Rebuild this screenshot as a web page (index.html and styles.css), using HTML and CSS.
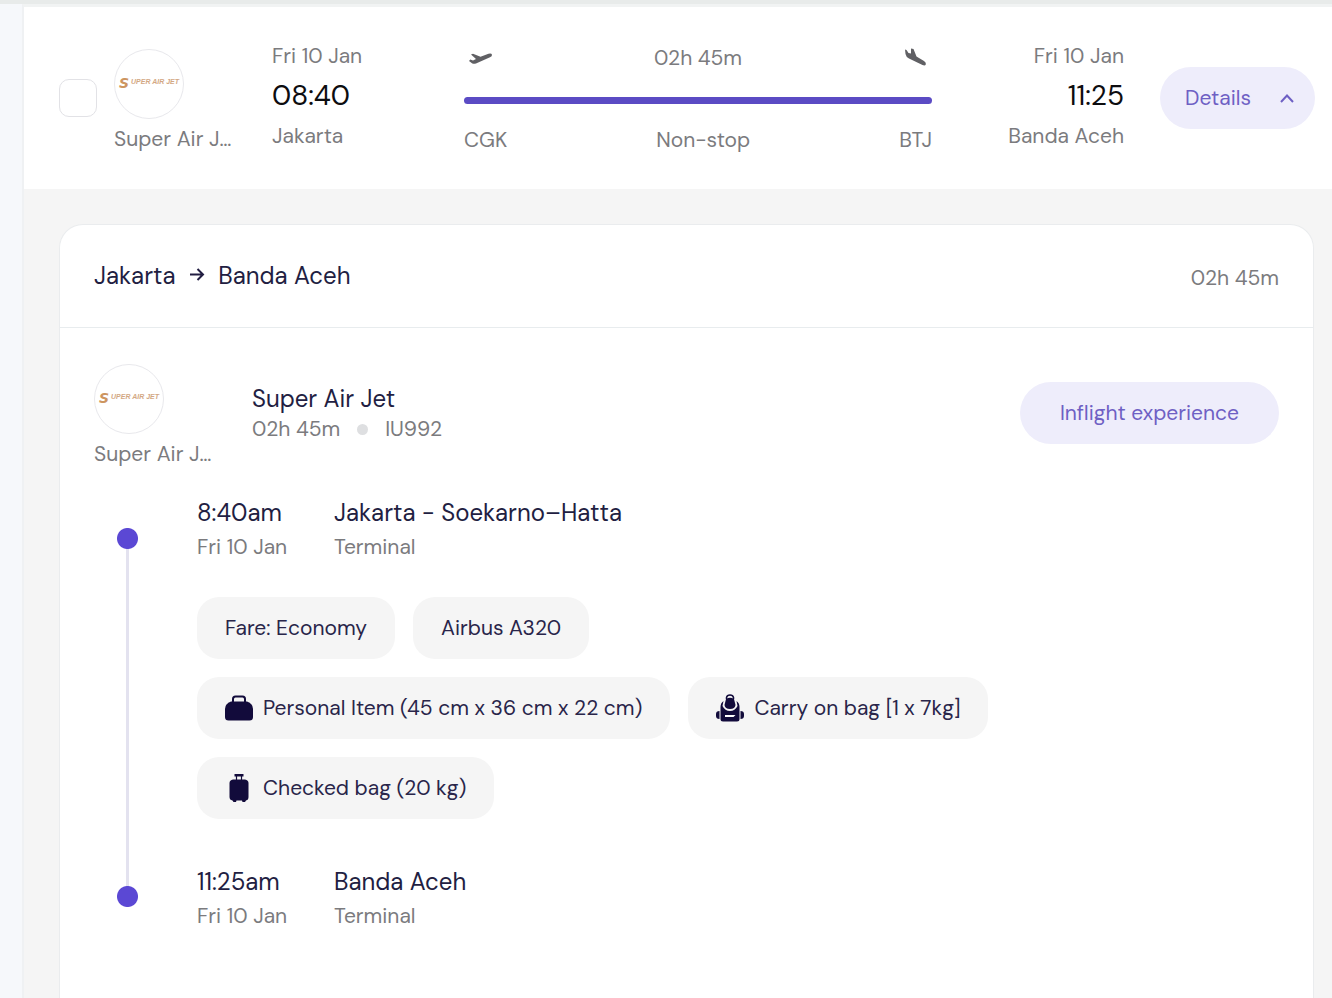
FILE: index.html
```html
<!DOCTYPE html>
<html lang="en">
<head>
<meta charset="utf-8">
<meta name="viewport" content="width=device-width, initial-scale=1">
<title>Jakarta to Banda Aceh</title>
<link rel="stylesheet" href="styles.css">
</head>
<body>
<main class="result">
  <section class="summary" aria-label="Flight summary">
    <input class="pick" type="checkbox" aria-label="Select flight">
    <div class="airline">
      <svg class="logo" viewBox="0 0 70 70" role="img" aria-label="Super Air Jet logo">
        <circle cx="35" cy="35" r="34.5" fill="#fff" stroke="#e8e8ec"/>
        <text class="logo-s" x="5" y="39">S</text>
        <text class="logo-name" x="17" y="35">UPER AIR JET</text>
      </svg>
      <span class="airline-name">Super Air Jet</span>
    </div>
    <div class="endpoint">
      <span>Fri 10 Jan</span>
      <strong class="clock">08:40</strong>
      <span>Jakarta</span>
    </div>
    <div class="route">
      <div class="route-row">
        <svg class="plane" viewBox="0 0 32 28" aria-hidden="true"><path d="M5 17 6.300 15.600 9 16.500 12 15 7 10.500 9 9.800 16.500 12.700 24.500 9.800Q27.500 9 28 10.800 28.200 12.300 26 13.300L12 19.500Q9.500 20.300 8 19.300Z"/></svg>
        <span>02h 45m</span>
        <svg class="plane" viewBox="0 0 32 28" aria-hidden="true"><path d="M5 5.500 6.500 6 8.500 9 11 9.500 11 4.500 13.500 5 16.500 12.500 24 17Q26.500 18.500 25.800 20.500 25 22 22.500 21L9 14.500Q6 13 5.500 10Z"/></svg>
      </div>
      <div class="route-bar"></div>
      <div class="route-row">
        <span>CGK</span><span>Non-stop</span><span>BTJ</span>
      </div>
    </div>
    <div class="endpoint endpoint-end">
      <span>Fri 10 Jan</span>
      <strong class="clock">11:25</strong>
      <span>Banda Aceh</span>
    </div>
    <button class="pill pill-details" type="button" aria-expanded="true">
      Details
      <svg class="chevron" viewBox="0 0 16 16" aria-hidden="true"><path d="M2 12 8 5.500l6 6.500"/></svg>
    </button>
  </section>

  <section class="details" aria-label="Flight details">
    <article class="card">
      <header class="card-head">
        <h2 class="title">Jakarta
          <svg class="arrow" viewBox="0 0 16 16" aria-hidden="true"><path d="M1 6.500h13M8.500 1l5.500 5.500L8.500 12"/></svg>
          Banda Aceh</h2>
        <span class="duration">02h 45m</span>
      </header>
      <div class="card-body">
        <div class="carrier">
          <div class="airline">
            <svg class="logo" viewBox="0 0 70 70" role="img" aria-label="Super Air Jet logo">
              <circle cx="35" cy="35" r="34.5" fill="#fff" stroke="#e8e8ec"/>
              <text class="logo-s" x="5" y="39">S</text>
              <text class="logo-name" x="17" y="35">UPER AIR JET</text>
            </svg>
            <span class="airline-name">Super Air Jet</span>
          </div>
          <div class="carrier-info">
            <h3 class="title">Super Air Jet</h3>
            <p class="meta"><span>02h 45m</span><i class="dot"></i><span>IU992</span></p>
          </div>
          <button class="pill pill-inflight" type="button">Inflight experience</button>
        </div>

        <div class="timeline">
          <div class="rail"></div>
          <div class="stops">
            <div class="stop">
              <div class="stop-time"><p class="title">8:40am</p><p>Fri 10 Jan</p></div>
              <div><p class="title">Jakarta - Soekarno–Hatta</p><p>Terminal</p></div>
            </div>
            <ul class="chips">
              <li class="chip">Fare: Economy</li>
              <li class="chip">Airbus A320</li>
              <li class="chip">
                <svg class="bag" viewBox="0 0 28 28" aria-hidden="true"><path d="M8 8.500V5Q8 2.500 10.500 2.500h7Q20 2.500 20 5V8.500" fill="none" stroke="#120b3b" stroke-width="2"/><path d="M6 7.500H22Q28 9.500 28 15V23Q28 26.500 24.500 26.500H3.500Q0 26.500 0 23V15Q0 9.500 6 7.500Z"/></svg>
                Personal Item (45 cm x 36 cm x 22 cm)
              </li>
              <li class="chip">
                <svg class="bag" viewBox="0 0 28 28" aria-hidden="true"><path d="M10.500 5V3.500Q11 1 14 1t3.500 2.500V5" fill="none" stroke="#120b3b" stroke-width="1.500"/><path d="M10 5Q14 2.500 18 5L19.500 11Q19 15 14 15T8.500 11Z"/><path d="M7.500 7 6.500 12Q9 17 14 17t7.500-5L20.500 7Q23.500 9 23.500 13V25Q23.500 27.500 21 27.500H7Q4.500 27.500 4.500 25V13Q4.500 9 7.500 7Z"/><path d="M3.500 17Q0 17 0 20v2q0 3 3.500 3ZM24.500 17Q28 17 28 20v2q0 3-3.500 3Z"/><path d="M9 21H19.500l-2 2H9Z" fill="#fff"/></svg>
                Carry on bag [1 x 7kg]
              </li>
              <li class="chip">
                <svg class="bag" viewBox="0 0 28 28" aria-hidden="true"><path d="M9.500 0h9v2.500h-9Z"/><path d="M11.500 2v4M16.500 2v4" fill="none" stroke="#120b3b" stroke-width="1.200"/><path d="M8 5.500H20Q23.500 6 23.500 9V23Q23.500 26 21 26.500L20 28H17.500L17 26.500H11.500L11 28H8.500L7.500 26.500Q4.500 26 4.500 23V9Q4.500 6 8 5.500Z"/></svg>
                Checked bag (20 kg)
              </li>
            </ul>
            <div class="stop">
              <div class="stop-time"><p class="title">11:25am</p><p>Fri 10 Jan</p></div>
              <div><p class="title">Banda Aceh</p><p>Terminal</p></div>
            </div>
          </div>
        </div>
      </div>
    </article>
  </section>
</main>
</body>
</html>
```
FILE: styles.css
```css
* { box-sizing: border-box; }

body {
  margin: 0;
  min-height: 100vh;
  display: flex;
  background: #f6f8fb;
  color: #7b7b7e;
  font: 400 21px/28px "DM Sans", Inter, "Liberation Sans", sans-serif;
  border-top: 4px solid #e8ebea;
}

h2, h3, p, ul { margin: 0; padding: 0; }

.result {
  flex: 1;
  min-width: 0;
  margin-left: 22px;
  border-left: 2px solid #eff1f3;
  border-top: 3px solid #f1f3f3;
  display: flex;
  flex-direction: column;
  background: #f5f5f5;
}

.summary {
  display: flex;
  align-items: center;
  padding: 29px 17px 29px 35px;
  background: #fff;
}

.pick {
  appearance: none;
  flex: none;
  width: 38px;
  height: 38px;
  margin: 0 17px 0 0;
  border: 1px solid #e2e2e6;
  border-radius: 10px;
  background: #fff;
}

.airline {
  flex: none;
  display: flex;
  flex-direction: column;
  gap: 6px;
  width: 118px;
  margin-right: 40px;
}

.summary .airline { padding-top: 6px; }

.logo { display: block; width: 70px; height: 70px; }

.logo-s { font: italic 700 14px "DejaVu Sans", sans-serif; fill: #cd9560; }

.logo-name { font: italic 700 7px "Liberation Sans", sans-serif; fill: #d3a884; }

.airline-name {
  overflow: hidden;
  white-space: nowrap;
  text-overflow: ellipsis;
}

.endpoint {
  flex: none;
  display: flex;
  flex-direction: column;
  width: 156px;
  padding-bottom: 4px;
  line-height: 40px;
}

.endpoint-end { text-align: right; }

.clock { font-size: 28px; font-weight: 400; color: #0d0d0f; }

.route { flex: 1; margin: 0 36px; padding-top: 2px; }

.route-row { display: flex; justify-content: space-between; }

.route-bar {
  height: 7px;
  margin: 25px 0 22px;
  border-radius: 4px;
  background: #5b4bc4;
}

.plane { width: 32px; height: 28px; fill: #606064; }

.pill {
  flex: none;
  display: flex;
  align-items: center;
  justify-content: center;
  height: 62px;
  padding: 0 40px;
  border: 0;
  border-radius: 31px;
  background: #eeedfb;
  color: #6e60c4;
  font: inherit;
}

.pill-details {
  justify-content: space-between;
  width: 155px;
  margin-left: 36px;
  padding: 0 20px 0 25px;
}

.pill-inflight { margin-bottom: 6px; }

.chevron, .arrow { width: 16px; height: 16px; fill: none; stroke: currentColor; stroke-width: 2; }

.details {
  flex: 1;
  display: flex;
  padding: 35px 18px 0 35px;
}

.card {
  flex: 1;
  min-width: 0;
  border: 1px solid #eaecee;
  border-bottom: 0;
  border-radius: 24px 24px 0 0;
  background: #fff;
}

.card-head {
  display: flex;
  align-items: center;
  justify-content: space-between;
  padding: 35px 34px;
  border-bottom: 1px solid #e8ecee;
}

.duration { padding-top: 4px; }

.title {
  color: #221e42;
  font-size: 24px;
  font-weight: 400;
  line-height: 32px;
}

.arrow { margin: 0 7px; }

.card-body { padding: 36px 34px; }

.carrier { display: flex; align-items: center; }

.carrier-info { flex: 1; padding-bottom: 6px; }

.meta { display: flex; align-items: center; }

.dot {
  width: 11px;
  height: 11px;
  margin: 0 17px;
  border-radius: 50%;
  background: #dedfe1;
}

.timeline { display: flex; gap: 59px; padding: 28px 0 0 23px; }

/* Vertical connector with a dot at each end */
.rail {
  flex: none;
  width: 21px;
  margin: 32px 0 26px;
  background:
    radial-gradient(circle at 50% 50%, #5b48d4 10px, transparent 11px) top / 21px 21px no-repeat,
    radial-gradient(circle at 50% 50%, #5b48d4 10px, transparent 11px) bottom / 21px 21px no-repeat,
    linear-gradient(#e3e2ef, #e3e2ef) center / 3px 100% no-repeat;
}

.stops { flex: 1; min-width: 0; }

.stop { display: flex; line-height: 34px; }

.stop .title { line-height: 34px; }

.stop-time { flex: none; width: 137px; }

.chips {
  display: flex;
  flex-wrap: wrap;
  gap: 18px;
  max-width: 820px;
  padding: 33px 0 46px;
  list-style: none;
}

.chip {
  display: flex;
  align-items: center;
  gap: 10px;
  min-height: 62px;
  padding: 0 28px;
  border-radius: 22px;
  background: #f5f5f5;
  color: #29254a;
}

.bag { flex: none; width: 28px; height: 28px; fill: #120b3b; }
```
